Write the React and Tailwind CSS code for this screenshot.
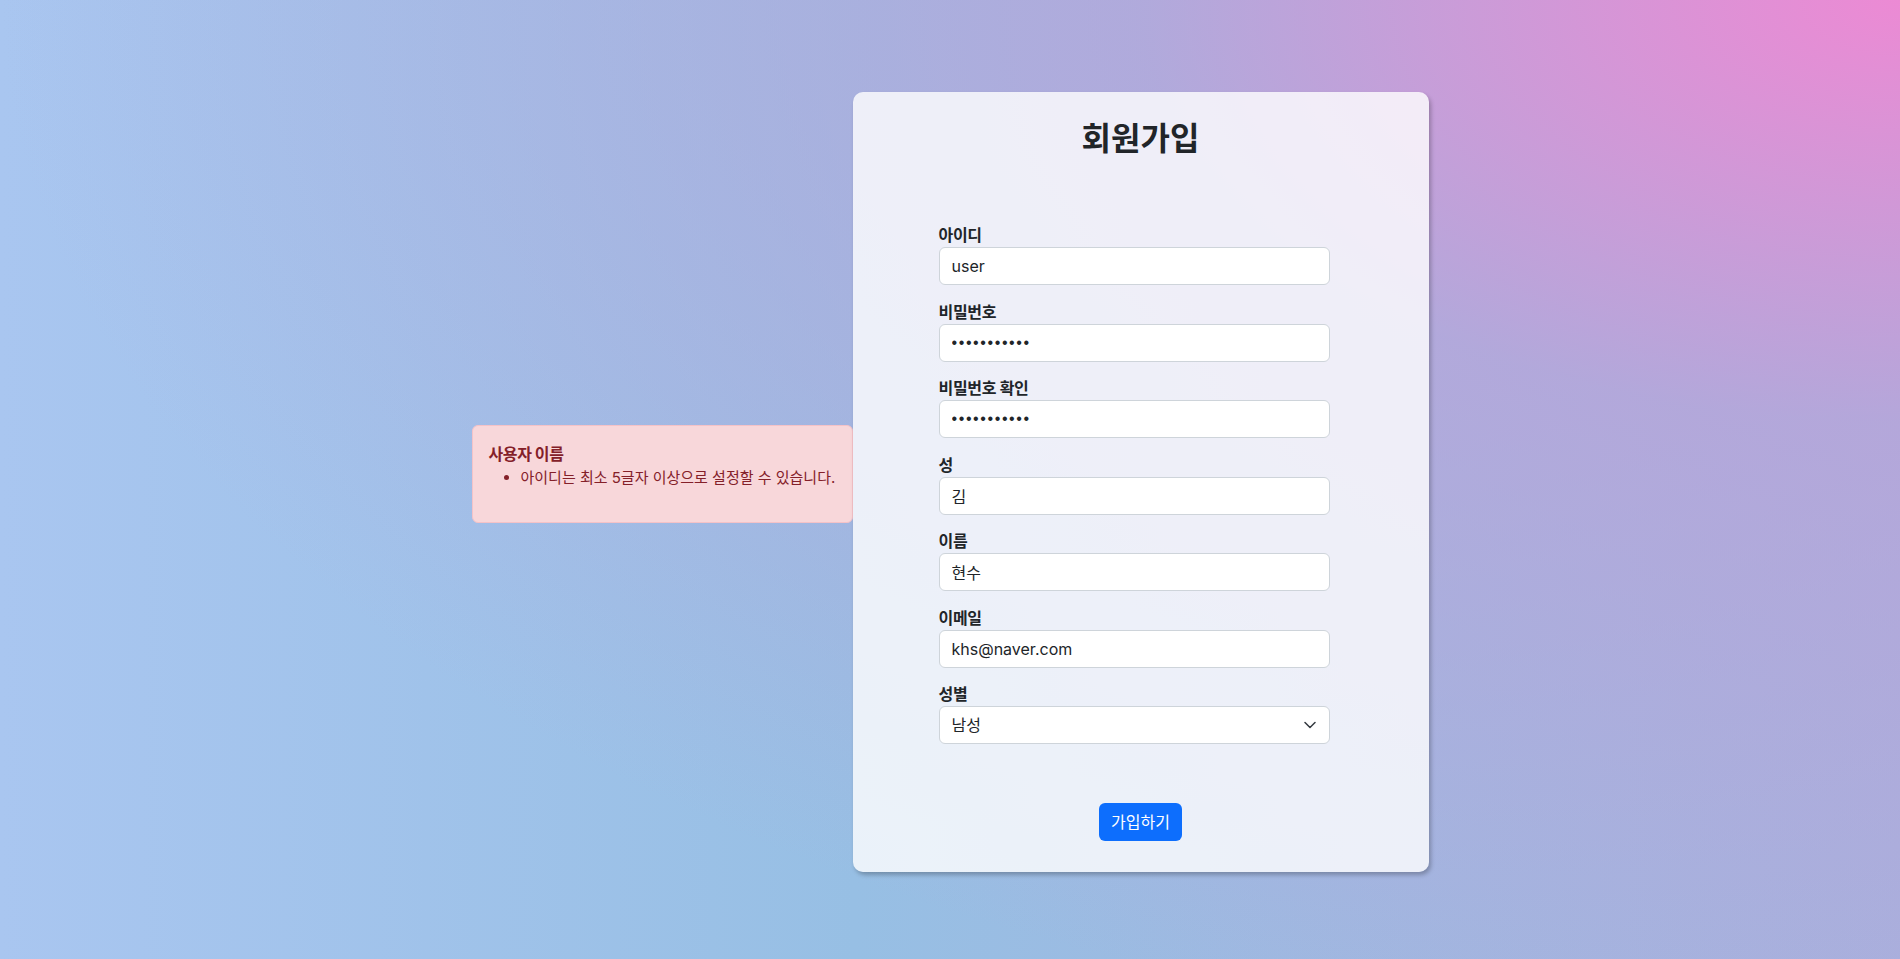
import React from 'react';

const fields = [
  { id: 'username', label: '아이디', type: 'text', value: 'user' },
  { id: 'password', label: '비밀번호', type: 'password', value: 'password123' },
  { id: 'password2', label: '비밀번호 확인', type: 'password', value: 'password123' },
  { id: 'lastName', label: '성', type: 'text', value: '김' },
  { id: 'firstName', label: '이름', type: 'text', value: '현수' },
  { id: 'email', label: '이메일', type: 'email', value: 'khs@naver.com' },
];

function Field({ id, label, type, value }) {
  const isPw = type === 'password';
  return (
    <div className="flex flex-col">
      <label htmlFor={id} className="h-6 text-base leading-6 font-bold text-[#212529] tracking-[-0.3px]">
        {label}
      </label>
      <input
        id={id}
        type={type}
        defaultValue={value}
        readOnly
        className={
          isPw
            ? "block w-full h-[38px] rounded-[6px] border border-[#ced4da] bg-white px-3 font-['Liberation_Sans',sans-serif] text-base tracking-[1.6px] text-[#212529] outline-none"
            : "block w-full h-[38px] rounded-[6px] border border-[#ced4da] bg-white px-3 text-base text-[#212529] outline-none"
        }
      />
    </div>
  );
}

export default function App() {
  return (
    <div className="min-h-screen w-full flex justify-center items-start pt-[92px] font-[Inter,'Noto_Sans_CJK_KR',sans-serif] bg-[image:radial-gradient(ellipse_100%_110%_at_100%_0%,rgba(236,138,212,1)_0%,rgba(185,163,217,0.7)_40%,rgba(185,163,217,0)_100%),linear-gradient(to_right,#a9c6f0_0%,#97bfe4_45%,#a8b0dd_100%)]">
      <div className="flex items-center">
        {/* validation errors */}
        <div className="w-[381px] mb-[17px] rounded-[6px] border border-[#f5c2c7] bg-[#f8d7da] px-4 pt-4 pb-4 text-[#842029]">
          <div className="text-base leading-6 font-bold tracking-[-0.4px]">사용자 이름</div>
          <ul className="list-disc pl-8 mb-4 text-[15px] leading-6 whitespace-nowrap">
            <li>아이디는 최소 5글자 이상으로 설정할 수 있습니다.</li>
          </ul>
        </div>

        {/* signup card */}
        <div className="w-[576px] rounded-[10px] bg-white/80 shadow-[2px_3px_4px_rgba(0,0,0,0.25)] pt-[28px] pb-[31px] flex flex-col">
          <h2 className="text-center text-[32px] leading-[38px] font-bold text-[#212529]">회원가입</h2>

          <form className="mt-[65px] ml-[86px] w-[391px] flex flex-col gap-[14.5px]">
            {fields.map((f) => (
              <Field key={f.id} {...f} />
            ))}
            <div className="flex flex-col">
              <label htmlFor="gender" className="h-6 text-base leading-6 font-bold text-[#212529] tracking-[-0.3px]">
                성별
              </label>
              <div className="relative">
                <select
                  id="gender"
                  defaultValue="M"
                  className="block w-full h-[38px] appearance-none rounded-[6px] border border-[#ced4da] bg-white pl-3 pr-9 text-base text-[#212529] outline-none"
                >
                  <option value="M">남성</option>
                  <option value="F">여성</option>
                </select>
                <svg
                  className="pointer-events-none absolute right-[14px] top-1/2 -translate-y-1/2"
                  width="12"
                  height="8"
                  viewBox="0 0 12 8"
                  fill="none"
                  stroke="#343a40"
                  strokeWidth="1.5"
                  strokeLinecap="round"
                  strokeLinejoin="round"
                >
                  <path d="M1 1.5l5 5 5-5" />
                </svg>
              </div>
            </div>
          </form>

          <div className="mt-[59px] flex justify-center">
            <button
              type="button"
              className="h-[38px] rounded-[6px] bg-[#0d6efd] px-3 text-base leading-6 text-white"
            >
              가입하기
            </button>
          </div>
        </div>
      </div>
    </div>
  );
}
